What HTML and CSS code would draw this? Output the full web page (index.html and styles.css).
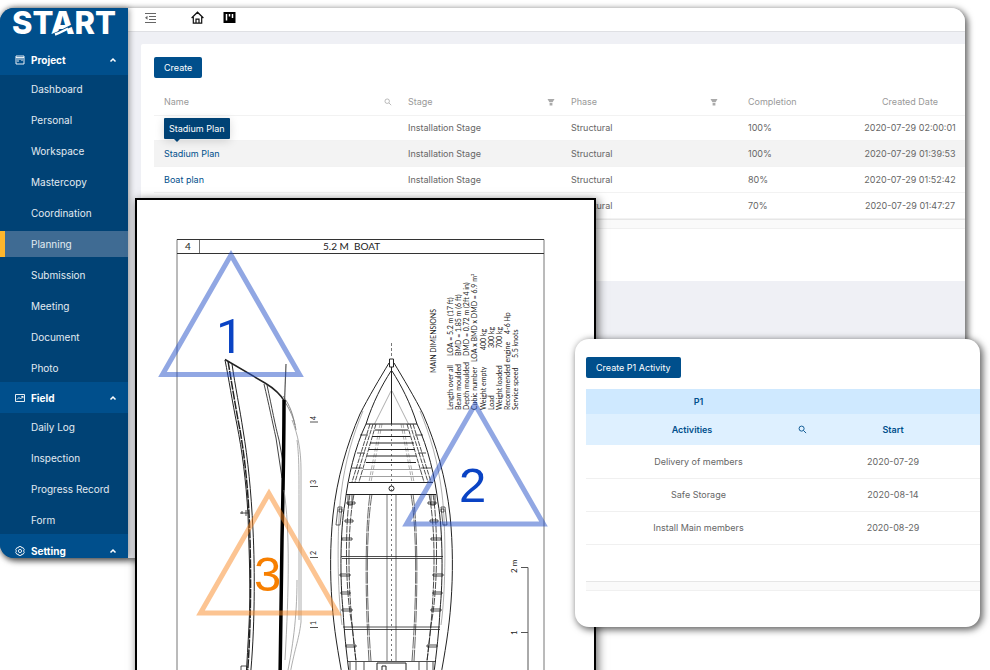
FILE: index.html
```html
<!DOCTYPE html>
<html lang="en">
<head>
  <meta charset="UTF-8">
  <meta name="viewport" content="width=device-width, initial-scale=1.0">
  <title>START - Planning</title>
  <link rel="stylesheet" href="styles.css">
</head>
<body>

  <!-- Shared icons -->
  <svg class="sprite" aria-hidden="true">
    <symbol id="icon-search" viewBox="0 0 10 10">
      <circle cx="4" cy="4" r="2.8" fill="none" stroke="currentColor"/>
      <path d="M6.2 6.2 9 9" stroke="currentColor" fill="none"/>
    </symbol>
    <symbol id="icon-filter" viewBox="0 0 8 8">
      <path d="M.5 1h7L5.6 4.2H2.4zM2.6 5h2.8v2.4H2.6z" fill="currentColor"/>
    </symbol>
    <symbol id="icon-up" viewBox="0 0 8 6">
      <path d="M1.5 4.6 4 2l2.5 2.6" stroke="currentColor" stroke-width="1.5" fill="none"/>
    </symbol>
  </svg>

  <!-- Main application window -->
  <div class="app">
    <nav class="sidebar">
      <a class="logo" href="#" aria-label="START">
        <svg width="108" height="36" viewBox="0 0 108 36">
          <text x="0" y="26">START</text>
          <path d="M37 28C45 25.5 53 21 62 16.500" stroke="#004f8c" stroke-width="2" fill="none"/>
          <path d="M43 26.500C49 24.500 52 22.500 56 20.500" stroke="#fff" stroke-width="2.500" fill="none"/>
        </svg>
      </a>

      <button class="group" type="button">
        <svg width="10" height="10" viewBox="0 0 10 10" fill="none" stroke="currentColor"><path d="M1 1h8v8H1zM3 3v4M5 3v2M7 3v3M1 2.5h8" stroke-width=".9"/></svg>
        <span>Project</span>
        <svg class="caret" width="8" height="6"><use href="#icon-up"/></svg>
      </button>
      <ul>
        <li><a href="#">Dashboard</a></li>
        <li><a href="#">Personal</a></li>
        <li><a href="#">Workspace</a></li>
        <li><a href="#">Mastercopy</a></li>
        <li><a href="#">Coordination</a></li>
        <li><a class="active" href="#">Planning</a></li>
        <li><a href="#">Submission</a></li>
        <li><a href="#">Meeting</a></li>
        <li><a href="#">Document</a></li>
        <li><a href="#">Photo</a></li>
      </ul>

      <button class="group" type="button">
        <svg width="10" height="10" viewBox="0 0 10 10" fill="none" stroke="currentColor"><path d="M.5 1.5h9v7h-9zM2 6.5l2-2 1.5 1.5L8 3.5M6.3 3.5H8v1.7" stroke-width=".9"/></svg>
        <span>Field</span>
        <svg class="caret" width="8" height="6"><use href="#icon-up"/></svg>
      </button>
      <ul>
        <li><a href="#">Daily Log</a></li>
        <li><a href="#">Inspection</a></li>
        <li><a href="#">Progress Record</a></li>
        <li><a href="#">Form</a></li>
      </ul>

      <button class="group last" type="button">
        <svg width="10" height="10" viewBox="0 0 10 10" fill="none" stroke="currentColor"><path d="M3.8.6h2.4l.5 1.2 1.4-.1 1.2 2-.8 1.3.8 1.3-1.2 2-1.4-.1-.5 1.2H3.8l-.5-1.2-1.4.1-1.2-2L1.5 5 .7 3.700l1.200-2 1.400.1z" stroke-width=".9"/><circle cx="5" cy="5" r="1.600" stroke-width=".9"/></svg>
        <span>Setting</span>
        <svg class="caret" width="8" height="6"><use href="#icon-up"/></svg>
      </button>
    </nav>

    <main>
      <div class="topbar">
        <button type="button" aria-label="Collapse menu">
          <svg width="13" height="13" viewBox="0 0 13 13" fill="none" stroke="#666"><path d="M1 2.500h11M5 5.500h7M5 8.500h7M1 11.500h11"/><path d="M3.500 4.800v4L1 6.800z" fill="#666" stroke="none"/></svg>
        </button>
        <button type="button" aria-label="Home">
          <svg width="13" height="13" viewBox="0 0 13 13" fill="none" stroke="#111" stroke-width="1.200"><path d="M.6 7 6.500 1.200 12.400 7M2.300 6v6.200h8.400V6M5 12V8.200h3V12"/></svg>
        </button>
        <button type="button" aria-label="Board">
          <svg width="13" height="13" viewBox="0 0 13 13"><path d="M.5 1h12v11H.5z" fill="#000"/><path d="M3.500 3v6.500M6.500 3v2.500M9.500 3v4" stroke="#fff" stroke-width="1.500"/></svg>
        </button>
      </div>

      <section class="panel">
        <button class="btn" type="button">Create</button>
        <table class="plans">
          <colgroup>
            <col>
            <col class="col-stage">
            <col class="col-phase">
            <col class="col-completion">
            <col class="col-created">
          </colgroup>
          <thead>
            <tr>
              <th><div class="head">Name <svg width="8" height="8"><use href="#icon-search"/></svg></div></th>
              <th><div class="head">Stage <svg width="8" height="8"><use href="#icon-filter"/></svg></div></th>
              <th><div class="head phase-head">Phase <svg width="8" height="8"><use href="#icon-filter"/></svg></div></th>
              <th>Completion</th>
              <th class="created">Created Date</th>
            </tr>
          </thead>
          <tbody>
            <tr class="first"><td></td><td>Installation Stage</td><td>Structural</td><td>100%</td><td class="created">2020-07-29 02:00:01</td></tr>
            <tr class="hovered">
              <td><div class="tip-anchor"><a href="#">Stadium Plan</a><span class="tip" role="tooltip">Stadium Plan</span></div></td>
              <td>Installation Stage</td><td>Structural</td><td>100%</td><td class="created">2020-07-29 01:39:53</td>
            </tr>
            <tr><td><a href="#">Boat plan</a></td><td>Installation Stage</td><td>Structural</td><td>80%</td><td class="created">2020-07-29 01:52:42</td></tr>
            <tr><td></td><td></td><td>Structural</td><td>70%</td><td class="created">2020-07-29 01:47:27</td></tr>
          </tbody>
        </table>
        <div class="scroll-strip"></div>
      </section>
    </main>
  </div>

  <!-- Boat drawing with numbered markers -->
  <div class="drawing">
    <svg viewBox="137 200 457 480" role="img" aria-label="5.2 M boat plan">
      <defs>
        <!-- Port half of the hull, mirrored for starboard -->
        <g id="half-hull">
          <path d="M389 363C380 378 368 398 360 414C347 444 337 478 333 515C330 545 330 575 332 602C334 630 338 652 343 680"/>
          <path d="M391 371C382 385 373 402 366 424C355 447 348 477 345 503C340 530 340 582 343 610C344 630 346 650 350 680"/>
          <path d="M391 391 374 425M363 411C353 435 345 461 341 494C337 526 337 590 342 625" stroke="#777" stroke-width=".6"/>
          <path d="M376 424 359 482M373 424 355 482M370 424 352 482" stroke-dasharray="5 1" stroke-width=".8"/>
          <path d="M382 424 371 482M380 424 369 482" stroke="#777" stroke-width=".6" stroke-dasharray="4 2"/>
          <path d="M350 494C345 525 345 590 352 625L356 661M354 494C347 530 347 590 356 661" stroke-dasharray="7 1" stroke-width=".8"/>
          <path d="M372 494C366 530 366 595 371 661M370 494C365 530 365 595 369 661" stroke="#444" stroke-width=".8" stroke-dasharray="12 1"/>
          <path d="M387 494V661" stroke="#777"/>
          <path d="M338 507h4l-2 18h-4zM339 509h3v3h-3z" stroke-width=".7"/>
          <path d="M360 435h8M357 453h8M352 468h10M347 502h8v2h-8zM345 520h8v2h-8zM342 538h10v2h-10zM340 574h10v2h-10zM341 592h9v2h-9zM342 609h10v2h-10zM346 645h10v2h-10zM350 662v18M356 662v18M364 662v18" stroke-width=".8"/>
          <path d="M348 495v10h4v-10" stroke-width=".8"/>
        </g>
      </defs>

      <!-- Sheet frame -->
      <g class="frame">
        <path d="M177 680V239.500H544V680M177 253.500H544M199.500 240v13.500"/>
        <path d="M177 239.500H544M177 253.500H544" stroke="#333"/>
      </g>
      <text class="title" x="188" y="250" text-anchor="middle">4</text>
      <text class="title" x="323" y="250" xml:space="preserve">5.2 M  BOAT</text>

      <!-- Side profile -->
      <g class="ink">
        <path d="M225 359.500 265 383C275 389 281 395 285 402" stroke-width="1.500"/>
        <path d="M285 402C290 410 294 418 296 430M283 396C290 405 293 415 295 425" stroke="#888"/>
        <path d="M225 360C229 380 232 400 237 425C242 450 246 480 248 515C249 550 251 590 249 625C248 645 247 660 246 680"/>
        <path d="M228 361C232 385 236 410 240 430C246 465 249 500 250 540C251 580 251 630 247 680" stroke-width="1.500" stroke-dasharray="9 1"/>
        <path d="M232 364C235 385 240 410 243 430C248 460 251 490 253 530C255 570 255 630 250 680"/>
        <path d="M264 384C269 405 272 420 276 438L282 478M267 385C272 408 275 425 279 440L283 462" stroke="#444"/>
        <path d="M286 364 284.500 402" stroke="#555" stroke-width="1.200"/>
        <path d="M284 400C284 450 283 490 282 540C281 590 281 630 280 680" stroke="#000" stroke-width="3.500"/>
        <path d="M292 420C298 435 301 450 301 470V622C299 640 294 650 289 680M297 440C299 455 299 470 299 500V620M284 490C290 530 289 590 285 660M297 580C297 620 292 650 288 670" stroke="#999" stroke-width=".8"/>
        <path d="M240 513h9M242 511v3M246 510v6M241 666h6v5h-6z" stroke-width=".8"/>
        <path d="M310 422h8M310 486.500h8M310 557.500h8M310 627.500h8" stroke="#555"/>
      </g>
      <g class="dims">
        <text transform="translate(316 420) rotate(-90)">4</text>
        <text transform="translate(316 484) rotate(-90)">3</text>
        <text transform="translate(316 555) rotate(-90)">2</text>
        <text transform="translate(316 625) rotate(-90)">1</text>
      </g>

      <!-- Plan view -->
      <g class="ink">
        <use href="#half-hull"/>
        <use href="#half-hull" transform="translate(783 0) scale(-1 1)"/>
        <path d="M389.500 359h4v8h-4z"/>
        <path d="M391.500 343v15" stroke-dasharray="3 2" stroke="#777"/>
        <path d="M391.500 367v57"/>
        <path d="M391.500 424v237" stroke-dasharray="2 3" stroke="#777"/>
        <path d="M366 424h51M375 430h33M372 436.500h38M370 443h44M369 449.500h46M367 456h49M366 462.500h50" stroke-width="1.200"/>
        <path d="M363 469.500h58M361 476.500h61" stroke="#888" stroke-width=".8"/>
        <path d="M349 482.500h84M346 494.500h90" stroke-width="1.200"/>
        <circle cx="391.500" cy="488.500" r="2.500"/>
        <path d="M341 556.500h102M342 558.500h100M343 627h97M344 629.500h96M348 661.500h88" stroke-width=".8"/>
        <path d="M377 680v-17h29v17M382 680v-14h4v14"/>
      </g>

      <!-- Scale bar -->
      <path class="scale" d="M521 567.500h7V680M521 632.500h7"/>
      <g class="small">
        <text transform="translate(517 573) rotate(-90)">2 m</text>
        <text transform="translate(517 635) rotate(-90)">1</text>
      </g>

      <!-- Dimensions, read from the bottom up -->
      <g class="dims" transform="translate(0 410) rotate(-90)">
        <text x="37" y="436">MAIN DIMENSIONS</text>
        <text y="453">Length over all<tspan x="54">LOA = 5.2 m (17 ft)</tspan></text>
        <text y="461">Beam moulded<tspan x="54">BMD = 1.85 m (6 ft)</tspan></text>
        <text y="469">Depth moulded<tspan x="54">DMD = 0.72 m (2ft 4 in)</tspan></text>
        <text y="477">Cubic number<tspan x="48">LOA x BMD x DMD = 6.9 m³</tspan></text>
        <text y="486">Weight empty<tspan x="60">400 kg</tspan></text>
        <text y="494">Load<tspan x="62">300 kg</tspan></text>
        <text y="502">Weight loaded<tspan x="62">700 kg</tspan></text>
        <text y="510">Recommended engine<tspan x="76">4-6 Hp</tspan></text>
        <text y="518">Service speed<tspan x="52">5.5 knots</tspan></text>
      </g>

      <!-- Markers -->
      <g class="marker">
        <path d="M231 255 162.500 374.500h137z"/>
        <text class="one" x="216" y="353">1</text>
      </g>
      <g class="marker">
        <path d="M475 404.500 406.500 524h137z"/>
        <text x="459" y="502">2</text>
      </g>
      <g class="marker orange">
        <path d="M269 493.500 200.500 613h137z"/>
        <text x="254" y="591">3</text>
      </g>
    </svg>
  </div>

  <!-- Activity window -->
  <section class="activity">
    <button class="btn" type="button">Create P1 Activity</button>
    <table>
      <colgroup>
        <col class="col-activity">
        <col>
      </colgroup>
      <thead>
        <tr class="phase"><th>P1</th><th></th></tr>
        <tr class="titles">
          <th><div class="activity-head"><span>Activities</span><svg width="9" height="9"><use href="#icon-search"/></svg></div></th>
          <th>Start</th>
        </tr>
      </thead>
      <tbody>
        <tr><td>Delivery of members</td><td>2020-07-29</td></tr>
        <tr><td>Safe Storage</td><td>2020-08-14</td></tr>
        <tr><td>Install Main members</td><td>2020-08-29</td></tr>
      </tbody>
    </table>
    <div class="scroll-strip"></div>
  </section>

</body>
</html>
```
FILE: styles.css
```css
/* Global Styles */
* {
  box-sizing: border-box;
}
body {
  font-family: Inter, sans-serif;
  font-size: 9px;
  margin: 0;
  padding: 8px 25px 0 0;
  min-height: 100vh;
  background: #fff;
  color: #666;
  position: relative;
  overflow: hidden;
}
button {
  font: inherit;
  border: 0;
  padding: 0;
  background: none;
}
a {
  color: #004f8c;
  text-decoration: none;
}
table {
  width: 100%;
  border-collapse: collapse;
  table-layout: fixed;
}
.sprite {
  display: none;
}
.btn {
  background: #004f8c;
  color: #fff;
  border-radius: 2px;
  padding: 0 10px;
  line-height: 21px;
}

/* App window */
.app {
  display: flex;
  border-radius: 14px;
  background: #eff0f5;
  box-shadow: 2px 2px 6px 1px rgba(0, 0, 0, 0.6);
}

/* Sidebar */
.sidebar {
  flex: 0 0 128px;
  background: #004275;
  color: #fff;
  border-radius: 14px 0 0 14px;
  box-shadow: 1px 0 6px rgba(0, 0, 0, 0.4);
  z-index: 1;
}
.logo {
  display: block;
  height: 36px;
  padding-left: 12px;
  background: #004f8c;
  border-radius: 14px 0 0 0;
}
.logo svg {
  display: block;
  overflow: visible;
}
.logo text {
  font-size: 31px;
  font-weight: 800;
  fill: #fff;
}
.group {
  display: flex;
  align-items: center;
  gap: 6px;
  width: 100%;
  height: 31px;
  padding: 0 11px 0 15px;
  background: #004f8c;
  color: #fff;
  font-size: 10px;
  font-weight: 700;
}
.last {
  height: 24px;
  padding-top: 10px;
  border-radius: 0 0 0 14px;
}
.caret {
  margin-left: auto;
}
.sidebar ul {
  list-style: none;
  margin: 0;
  padding: 1px 0;
  display: grid;
  gap: 5px;
}
.sidebar li a {
  display: block;
  padding-left: 31px;
  line-height: 26px;
  font-size: 10px;
  color: #e3ebf2;
}
.sidebar li .active {
  padding-left: 26px;
  border-left: 5px solid #fdb62c;
  background: #3f6b93;
}

/* Main area */
main {
  flex: 1;
  min-width: 0;
}
.topbar {
  display: flex;
  align-items: center;
  height: 24px;
  padding: 0 0 5px 16px;
  background: #fff;
  border-bottom: 1px solid #dfe0e4;
  border-radius: 0 14px 0 0;
}
.topbar button {
  display: flex;
}
.topbar button:first-child {
  margin-right: 34px;
}
.topbar button:last-child {
  margin-left: 19px;
}
.panel {
  margin: 12px 0 0 13px;
  padding: 13px 0 52px 13px;
  background: #fff;
  border-radius: 2px 0 0 2px;
}
.plans {
  margin-top: 11px;
}
.plans th,
.plans td {
  height: 26px;
  padding: 0 6px 0 10px;
  text-align: left;
  font-weight: 400;
  white-space: nowrap;
  border-bottom: 1px solid #f2f2f2;
}
.plans th {
  color: #999;
}
.plans .first td {
  height: 25px;
}
.plans .created {
  padding: 0;
  text-align: center;
}
.col-stage {
  width: 163px;
}
.col-phase {
  width: 177px;
}
.col-completion {
  width: 117px;
}
.col-created {
  width: 110px;
}
.head {
  display: flex;
  align-items: center;
  justify-content: space-between;
}
.head svg {
  color: #aaa;
}
.phase-head {
  padding-right: 14px;
}
.plans .hovered {
  background: #f3f3f3;
}
.tip-anchor {
  position: relative;
}
.tip {
  position: absolute;
  left: 0;
  bottom: 20px;
  padding: 0 5px;
  line-height: 21px;
  background: #004275;
  color: #fff;
  border-radius: 1px;
  box-shadow: 0 2px 10px rgba(0, 0, 0, 0.15);
}
.tip::after {
  content: "";
  position: absolute;
  left: 10px;
  top: 100%;
  border: 3px solid transparent;
  border-top-color: #004275;
  border-bottom: 0;
}
.scroll-strip {
  height: 10px;
  background: #fafafa;
  border-top: 1px solid #e6e6e6;
  border-bottom: 1px solid #f0f0f0;
}

/* Drawing window */
.drawing {
  position: absolute;
  z-index: 2;
  left: 135px;
  top: 198px;
  width: 461px;
  border: 2px solid #000;
  background: #fff;
  box-shadow: 2px 2px 9px rgba(0, 0, 0, 0.6);
}
.drawing svg {
  display: block;
}
.frame,
.ink,
.scale {
  fill: none;
  stroke: #222;
}
.frame {
  stroke: #777;
}
.scale {
  stroke: #555;
}
.title,
.small,
.dims {
  font-family: Lato, sans-serif;
  fill: #222;
}
.title {
  font-size: 10px;
}
.small {
  font-size: 8px;
}
.dims {
  font-size: 7px;
}
.marker path {
  fill: none;
  stroke: #2450c8;
  stroke-width: 5;
  opacity: 0.5;
}
.marker text {
  font-family: "Liberation Sans", sans-serif;
  font-size: 49px;
  fill: #0a43c4;
}
.marker .one {
  font-family: Roboto, sans-serif;
}
.orange path {
  stroke: #f98a25;
}
.orange text {
  fill: #f77f00;
}

/* Activity window */
.activity {
  position: absolute;
  z-index: 3;
  left: 575px;
  right: 10px;
  top: 339px;
  padding: 18px 0 36px 11px;
  background: #fff;
  border-radius: 14px;
  box-shadow: 2px 2px 7px 1px rgba(0, 0, 0, 0.6);
}
.activity table {
  margin: 11px 0 36px;
}
.activity th {
  height: 31px;
  padding: 0;
  font-weight: 600;
  color: #004f8c;
  background: #def0ff;
}
.activity .phase th {
  height: 25px;
  background: #cfe9ff;
}
.activity td {
  height: 33px;
  padding: 0;
  text-align: center;
  border-bottom: 1px solid #f0f0f0;
}
.col-activity {
  width: 225px;
}
.activity th:last-child,
.activity td:last-child {
  padding-right: 5px;
}
.activity-head {
  display: flex;
  align-items: center;
  padding-right: 4px;
}
.activity-head span {
  flex: 1;
}
```
